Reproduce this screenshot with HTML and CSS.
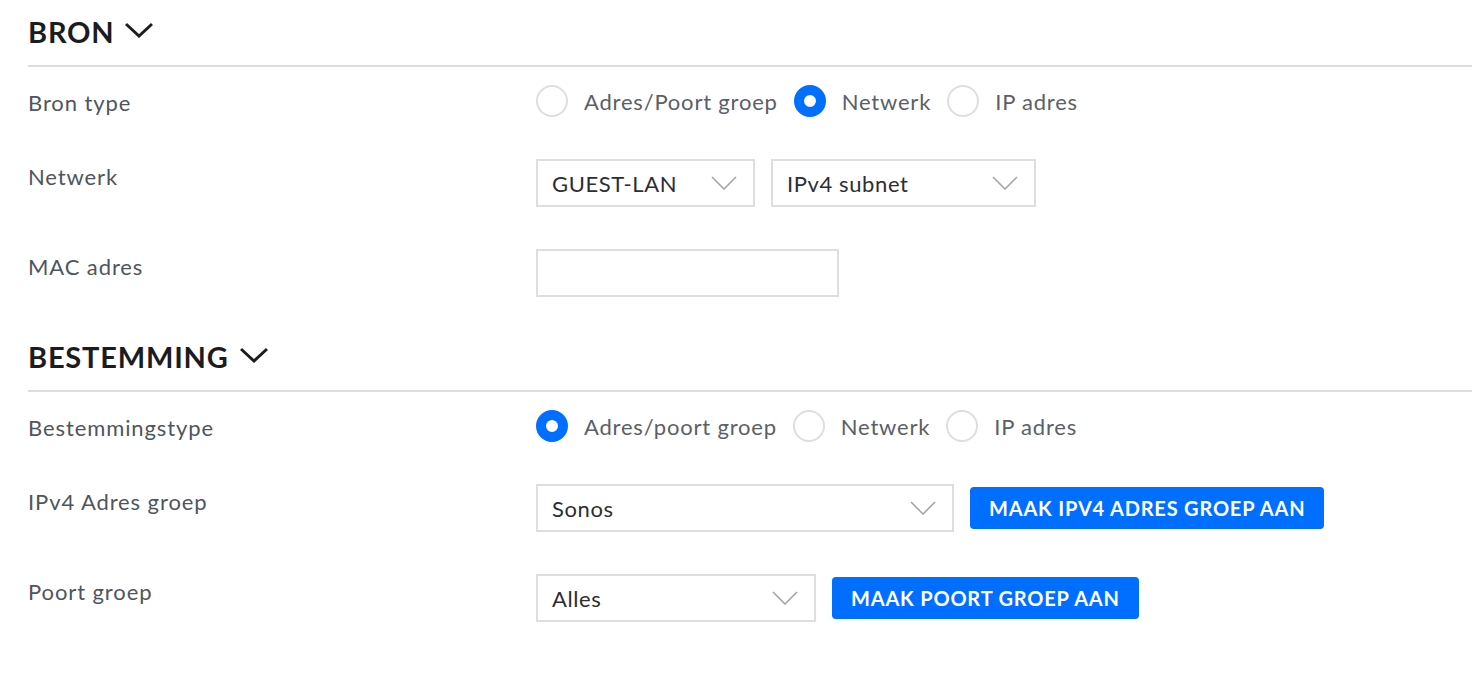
FILE: index.html
```html
<!DOCTYPE html>
<html lang="nl">
<head>
    <meta charset="UTF-8">
    <meta name="viewport" content="width=device-width, initial-scale=1.0">
    <title>Firewall regel</title>
    <link rel="stylesheet" href="styles.css">
</head>
<body>
    <div class="form-page">

        <!-- Bron -->
        <section class="block">
            <h2 class="block-head">
                BRON
                <svg class="head-chevron" viewBox="0 0 28 16"><path d="M1 2 L14 14 L27 2"/></svg>
            </h2>

            <div class="row row-radio">
                <div class="row-label">Bron type</div>
                <div class="radio-list">
                    <label class="radio"><span class="dot"></span>Adres/Poort groep</label>
                    <label class="radio"><span class="dot checked"></span>Netwerk</label>
                    <label class="radio"><span class="dot"></span>IP adres</label>
                </div>
            </div>

            <div class="row">
                <div class="row-label">Netwerk</div>
                <div class="field-line">
                    <div class="select w-guest">GUEST-LAN
                        <svg class="sel-chevron" viewBox="0 0 26 14"><path d="M1 1 L13 13 L25 1"/></svg>
                    </div>
                    <div class="select w-subnet">IPv4 subnet
                        <svg class="sel-chevron" viewBox="0 0 26 14"><path d="M1 1 L13 13 L25 1"/></svg>
                    </div>
                </div>
            </div>

            <div class="row">
                <div class="row-label">MAC adres</div>
                <div class="field-line">
                    <input class="text-input" type="text">
                </div>
            </div>
        </section>

        <!-- Bestemming -->
        <section class="block">
            <h2 class="block-head">
                BESTEMMING
                <svg class="head-chevron" viewBox="0 0 28 16"><path d="M1 2 L14 14 L27 2"/></svg>
            </h2>

            <div class="row row-radio">
                <div class="row-label">Bestemmingstype</div>
                <div class="radio-list">
                    <label class="radio"><span class="dot checked"></span>Adres/poort groep</label>
                    <label class="radio"><span class="dot"></span>Netwerk</label>
                    <label class="radio"><span class="dot"></span>IP adres</label>
                </div>
            </div>

            <div class="row">
                <div class="row-label">IPv4 Adres groep</div>
                <div class="field-line">
                    <div class="select w-sonos">Sonos
                        <svg class="sel-chevron" viewBox="0 0 26 14"><path d="M1 1 L13 13 L25 1"/></svg>
                    </div>
                    <button class="btn-blue">MAAK IPV4 ADRES GROEP AAN</button>
                </div>
            </div>

            <div class="row">
                <div class="row-label">Poort groep</div>
                <div class="field-line">
                    <div class="select w-alles">Alles
                        <svg class="sel-chevron" viewBox="0 0 26 14"><path d="M1 1 L13 13 L25 1"/></svg>
                    </div>
                    <button class="btn-blue">MAAK POORT GROEP AAN</button>
                </div>
            </div>
        </section>

    </div>
</body>
</html>
```

FILE: styles.css
```css
body {
    margin: 0;
    background-color: #ffffff;
    font-family: Lato, "Open Sans", Arial, sans-serif;
    color: #50555d;
}
.form-page {
    padding: 15px 0 0 28px;
}
.block-head {
    display: flex;
    align-items: center;
    gap: 11px;
    margin: 0;
    height: 52px;
    padding-bottom: 18px;
    box-sizing: border-box;
    border-bottom: 2px solid #dcdddf;
    font-size: 29px;
    font-weight: 700;
    letter-spacing: 0.8px;
    color: #1b1c1e;
    line-height: 1;
}
.block + .block {
    margin-top: 43px;
}
.block-head .head-chevron {
    width: 28px;
    height: 16px;
    margin-top: -2px;
}
.head-chevron path {
    fill: none;
    stroke: #1b1c1e;
    stroke-width: 3;
}
.row {
    display: grid;
    grid-template-columns: 508px 1fr;
    margin-top: 42px;
}
.row-radio {
    margin-top: 18px;
    align-items: center;
    height: 32px;
}
.row-label {
    font-size: 22px;
    letter-spacing: 0.9px;
    line-height: 24px;
    padding-top: 6px;
    color: #50555d;
}
.row-radio .row-label {
    padding-top: 3px;
}
.radio-list {
    display: flex;
    align-items: center;
}
.radio {
    display: flex;
    align-items: center;
    font-size: 22px;
    letter-spacing: 0.8px;
    color: #5b6068;
    margin-right: 16px;
}
.dot {
    width: 32px;
    height: 32px;
    box-sizing: border-box;
    border: 2px solid #dcdee1;
    border-radius: 50%;
    margin-right: 16px;
}
.dot.checked {
    border: 10px solid #006fff;
}
.field-line {
    display: flex;
    align-items: center;
    gap: 16px;
}
.select, .text-input {
    height: 48px;
    box-sizing: border-box;
    border: 2px solid #dcdee1;
    background: #ffffff;
}
.select {
    display: flex;
    align-items: center;
    justify-content: space-between;
    padding: 0 16px 0 14px;
    font-size: 22px;
    letter-spacing: 0.6px;
    color: #2c2e31;
}
.sel-chevron {
    width: 26px;
    height: 14px;
}
.sel-chevron path {
    fill: none;
    stroke: #a3a5a8;
    stroke-width: 1.6;
}
.w-guest { width: 219px; }
.w-subnet { width: 265px; }
.w-sonos { width: 418px; }
.w-alles { width: 280px; }
.text-input {
    width: 303px;
}
.btn-blue {
    height: 42px;
    padding: 0 19px;
    border: none;
    border-radius: 4px;
    background-color: #006fff;
    color: #ffffff;
    font-family: Lato, "Open Sans", Arial, sans-serif;
    font-size: 20px;
    font-weight: 700;
    letter-spacing: 0.8px;
}
```
